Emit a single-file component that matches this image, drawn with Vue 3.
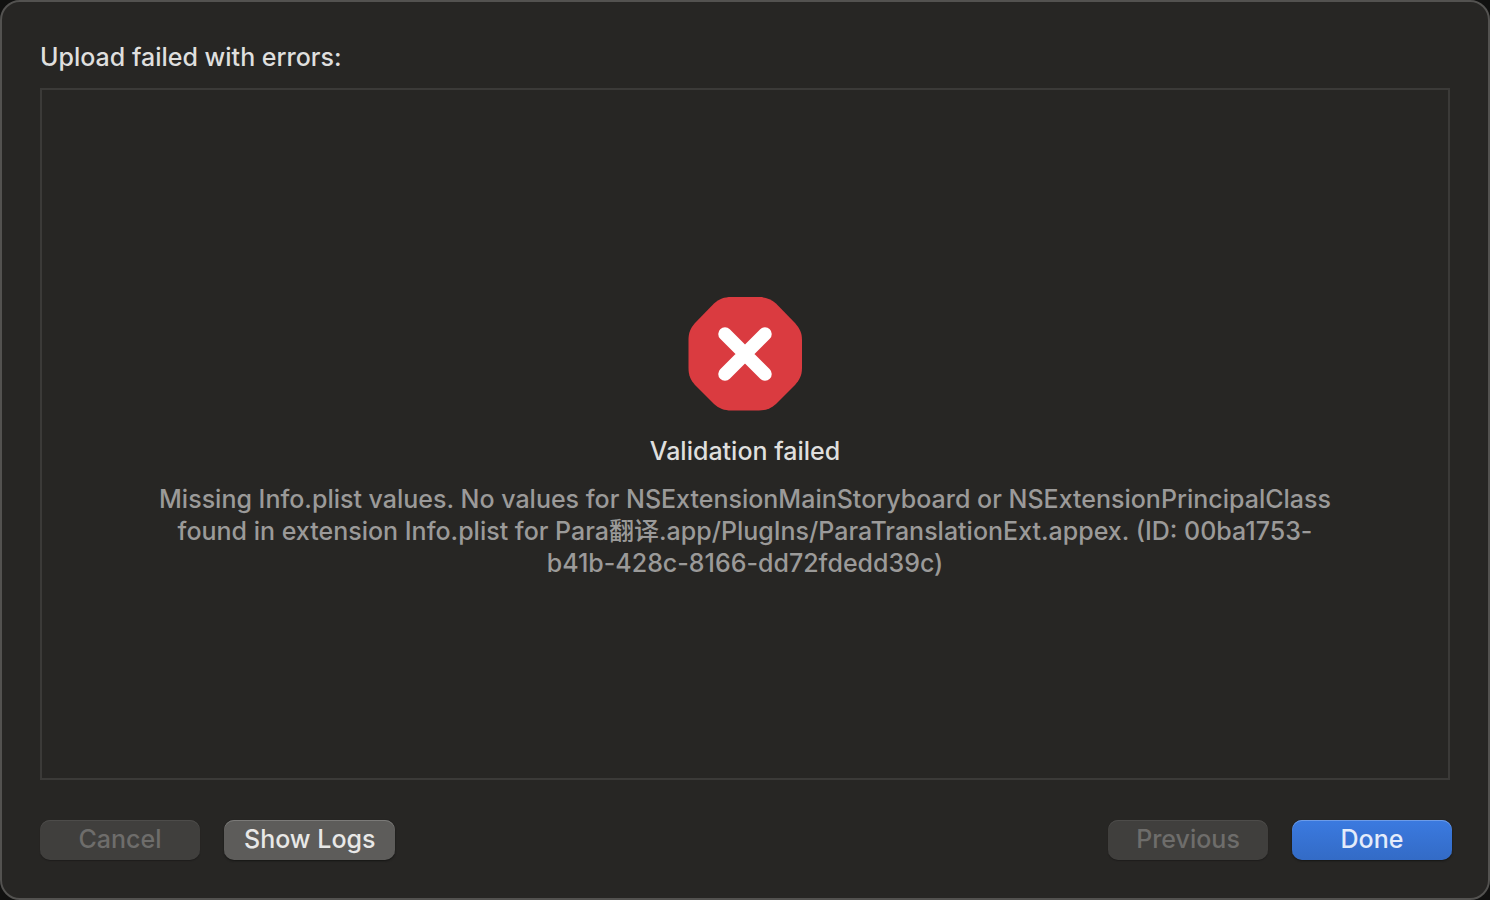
<script setup>
const heading = 'Upload failed with errors:'
const error = {
  title: 'Validation failed',
  detail:
    'Missing Info.plist values. No values for NSExtensionMainStoryboard or NSExtensionPrincipalClass found in extension Info.plist for Para翻译.app/PlugIns/ParaTranslationExt.appex. (ID: 00ba1753-b41b-428c-8166-dd72fdedd39c)',
}
</script>

<template>
  <main class="dialog">
    <h1 class="heading">{{ heading }}</h1>

    <section class="panel">
      <svg class="icon" viewBox="0 0 114 114" aria-hidden="true">
        <path
          fill="#da3b40"
          d="M43 0H71C77.500 0 83 2 88 6.500L107 26C111.500 31 114 36 114 43V71C114 78 111.500 83 107 88L88 107C83 111.500 77.500 113.500 71 113.500H43C36.500 113.500 31 111.500 26 107L7 88C2.500 83 .5 78 .5 71V43C.5 36 2.500 31 7 26L26 6.500C31 2 36.500 0 43 0Z"
        />
        <path d="M37 37L77 77M77 37L37 77" stroke="#fff" stroke-width="13.500" stroke-linecap="round" />
      </svg>
      <h2 class="title">{{ error.title }}</h2>
      <p class="detail">{{ error.detail }}</p>
    </section>

    <footer class="actions">
      <button type="button" class="button" disabled>Cancel</button>
      <button type="button" class="button secondary">Show Logs</button>
      <span class="spacer"></span>
      <button type="button" class="button" disabled>Previous</button>
      <button type="button" class="button primary">Done</button>
    </footer>
  </main>
</template>

<style>
body {
  background: #111110;
}
</style>

<style scoped>
.dialog {
  box-sizing: border-box;
  min-height: 100vh;
  display: flex;
  flex-direction: column;
  padding: 39px 38px 38px;
  border: 2px solid #535250;
  border-radius: 20px;
  background: #272624;
  color: #dfdfde;
  font-family: Inter, "Noto Sans CJK SC", sans-serif;
  font-size: 25px;
  font-weight: 500;
  line-height: 32px;
}

.heading,
.title,
.detail {
  margin: 0;
  font-size: inherit;
  font-weight: inherit;
}

.panel {
  flex: 1;
  display: flex;
  flex-direction: column;
  align-items: center;
  justify-content: center;
  margin: 15px 0 40px;
  padding: 8px 104px 0;
  border: 2px solid #3b3a38;
}

.icon {
  width: 114px;
  height: 114px;
  fill: none;
}

.title {
  margin-top: 24px;
}

.detail {
  margin-top: 16px;
  color: #9b9a99;
  text-align: center;
}

.actions {
  display: flex;
  gap: 24px;
  margin-right: -2px;
}

.spacer {
  flex: 1;
}

.button {
  box-sizing: border-box;
  min-width: 160px;
  height: 40px;
  padding: 0 20px 2px;
  border: 0;
  border-radius: 10px;
  background: #403f3d;
  box-shadow: inset 0 1px #4d4c4a, 0 1px 1px #1e1d1c;
  color: #6e6d6b;
  font: inherit;
}

.secondary {
  background: #5d5c5a;
  box-shadow: inset 0 1px #7b7a78, 0 1px 2px #151514;
  color: #e8e8e7;
}

.primary {
  background: linear-gradient(#3b7ae0, #336bc6);
  box-shadow: inset 0 1px #6c9be8, 0 1px 2px #151514;
  color: #e4ecfa;
}
</style>
